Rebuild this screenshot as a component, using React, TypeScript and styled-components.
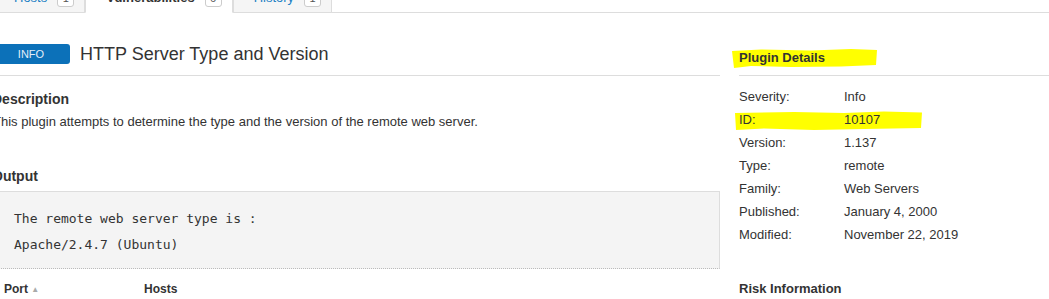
import styled, { createGlobalStyle } from "styled-components";

const GlobalStyle = createGlobalStyle`
  html, body {
    margin: 0;
    padding: 0;
    background: #fff;
    overflow: hidden;
  }
  body {
    font-family: "Liberation Sans", Arial, sans-serif;
    color: #333;
  }
`;

const details = [
  { label: "Severity:", value: "Info" },
  { label: "ID:", value: "10107", marked: true },
  { label: "Version:", value: "1.137" },
  { label: "Type:", value: "remote" },
  { label: "Family:", value: "Web Servers" },
  { label: "Published:", value: "January 4, 2000" },
  { label: "Modified:", value: "November 22, 2019" },
];

const App = () => {
  return (
    <Page>
      <GlobalStyle />
      <TabBar>
        <Tab>
          <TabLabel>Hosts</TabLabel>
          <Count>1</Count>
        </Tab>
        <Tab $active>
          <TabLabel $active>Vulnerabilities</TabLabel>
          <Count>6</Count>
        </Tab>
        <Tab>
          <TabLabel>History</TabLabel>
          <Count>1</Count>
        </Tab>
      </TabBar>

      <Columns>
        <Main>
          <Header>
            <Severity>INFO</Severity>
            <Title>HTTP Server Type and Version</Title>
          </Header>

          <SectionTitle>Description</SectionTitle>
          <Text>This plugin attempts to determine the type and the version of the remote web server.</Text>

          <SectionTitle $spaced>Output</SectionTitle>
          <Output>
            <OutputLine>The remote web server type is :</OutputLine>
            <OutputLine>Apache/2.4.7 (Ubuntu)</OutputLine>
          </Output>

          <TableHead>
            <HeadCell $width={140}>
              Port <SortArrow>▲</SortArrow>
            </HeadCell>
            <HeadCell>Hosts</HeadCell>
          </TableHead>
        </Main>

        <Side>
          <SideTitle>
            <Marked>
              <Marker width="146" height="21" viewBox="0 0 146 21" preserveAspectRatio="none" $left={-8} $top={-1}>
                <path d="M1 3 L30 1.5 L80 2.5 L120 1 L146 2 L145 17 L110 18.5 L60 19 L20 18 L3 20 Z" fill="#ffff00" />
              </Marker>
              <MarkedText>Plugin Details</MarkedText>
            </Marked>
          </SideTitle>

          <DetailList>
            {details.map((d) => (
              <DetailRow key={d.label}>
                {d.marked && (
                  <Marker width="188" height="20" viewBox="0 0 188 20" preserveAspectRatio="none" $left={-5} $top={3}>
                    <path d="M1 2 L60 1 L110 2 L150 0.5 L188 1.5 L187 17 L130 18 L80 19 L30 17.5 L2 19 Z" fill="#ffff00" />
                  </Marker>
                )}
                <DetailLabel>{d.label}</DetailLabel>
                <DetailValue>{d.value}</DetailValue>
              </DetailRow>
            ))}
          </DetailList>

          <SideTitle $plain>Risk Information</SideTitle>
        </Side>
      </Columns>
    </Page>
  );
};

export default App;

const Page = styled.div`
  margin: -16px 0 0 -8px;
  width: 1070px;
`;

const TabBar = styled.div`
  display: flex;
  align-items: flex-end;
  height: 29px;
  border-bottom: 1px solid #ddd;
  box-sizing: border-box;
  padding-left: 1px;
`;

const Tab = styled.div<{ $active?: boolean }>`
  display: flex;
  align-items: center;
  gap: 10px;
  height: 29px;
  box-sizing: border-box;
  padding: 0 10px 2px 20px;
  margin-bottom: -1px;
  border: 1px solid #ddd;
  border-bottom-color: ${(p) => (p.$active ? "#fff" : "#ddd")};
  border-radius: 4px 4px 0 0;
  background: ${(p) => (p.$active ? "#fff" : "#f5f5f5")};
`;

const TabLabel = styled.span<{ $active?: boolean }>`
  font-size: 13px;
  font-weight: ${(p) => (p.$active ? "bold" : "normal")};
  color: ${(p) => (p.$active ? "#333" : "#1a7fc4")};
`;

const Count = styled.span`
  display: inline-flex;
  align-items: center;
  justify-content: center;
  width: 17px;
  height: 18px;
  box-sizing: border-box;
  border: 1px solid #ccc;
  border-radius: 3px;
  background: #fff;
  font-size: 11px;
  color: #555;
`;

const Columns = styled.div`
  display: grid;
  grid-template-columns: 728px 1fr;
  column-gap: 19px;
`;

const Main = styled.div`
  display: flex;
  flex-direction: column;
`;

const Header = styled.div`
  display: flex;
  align-items: center;
  gap: 10px;
  padding: 30px 0 10px;
  border-bottom: 1px solid #ddd;
`;

const Severity = styled.span`
  display: inline-flex;
  align-items: center;
  justify-content: center;
  width: 78px;
  height: 20px;
  border-radius: 3px;
  background: #0c71b9;
  color: #e4eef8;
  font-size: 11px;
`;

const Title = styled.h1`
  margin: 0;
  font-size: 18px;
  font-weight: normal;
  line-height: 22px;
  color: #333;
`;

const SectionTitle = styled.h3<{ $spaced?: boolean }>`
  margin: ${(p) => (p.$spaced ? "35px" : "13px")} 0 0;
  font-size: 14px;
  font-weight: bold;
  line-height: 20px;
  color: #333;
`;

const Text = styled.p`
  margin: 4px 0 0 1px;
  font-size: 13px;
  line-height: 18px;
  color: #333;
`;

const Output = styled.div`
  margin-top: 5px;
  padding: 14px 0 10px 22px;
  background: #f4f4f4;
  border-top: 1px solid #ddd;
  border-right: 1px solid #ddd;
  border-bottom: 1px dotted #bbb;
`;

const OutputLine = styled.div`
  font-family: "DejaVu Sans Mono", "Liberation Mono", monospace;
  font-size: 13px;
  line-height: 26px;
  color: #333;
  white-space: pre;
`;

const TableHead = styled.div`
  display: flex;
  padding: 11px 12px 0;
`;

const HeadCell = styled.div<{ $width?: number }>`
  width: ${(p) => (p.$width ? `${p.$width}px` : "auto")};
  font-size: 12px;
  font-weight: bold;
  line-height: 18px;
  color: #333;
`;

const SortArrow = styled.span`
  font-size: 8px;
  color: #aaa;
  vertical-align: 1px;
`;

const Side = styled.div`
  display: flex;
  flex-direction: column;
`;

const SideTitle = styled.div<{ $plain?: boolean }>`
  padding: ${(p) => (p.$plain ? "34px 0 0" : "36px 0 8px")};
  border-bottom: ${(p) => (p.$plain ? "none" : "1px solid #ddd")};
  font-size: 13px;
  font-weight: bold;
  line-height: 18px;
  color: #333;
`;

const Marked = styled.span`
  position: relative;
  display: inline-block;
`;

const MarkedText = styled.span`
  position: relative;
`;

const Marker = styled.svg<{ $left: number; $top: number }>`
  position: absolute;
  left: ${(p) => p.$left}px;
  top: ${(p) => p.$top}px;
`;

const DetailList = styled.div`
  display: flex;
  flex-direction: column;
  margin-top: 9px;
`;

const DetailRow = styled.div`
  position: relative;
  display: flex;
  font-size: 13px;
  line-height: 23px;
  color: #333;
`;

const DetailLabel = styled.span`
  position: relative;
  width: 105px;
`;

const DetailValue = styled.span`
  position: relative;
`;
